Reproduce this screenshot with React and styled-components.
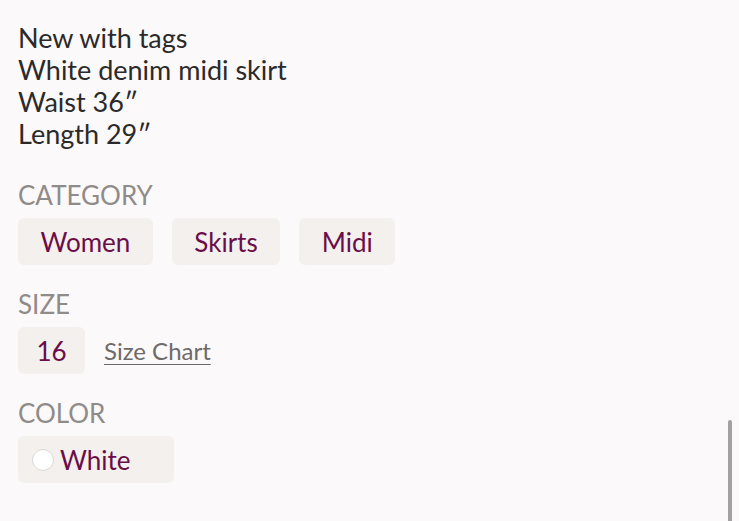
import styled, { createGlobalStyle } from "styled-components";

const Global = createGlobalStyle`
  html, body {
    margin: 0;
    padding: 0;
    background: #fcf9fa;
  }
  body {
    font-family: Lato, "Noto Sans", sans-serif;
  }
`;

const Page = styled.div`
  position: relative;
  width: 739px;
  height: 521px;
  overflow: hidden;
  padding: 22px 18px 0;
  box-sizing: border-box;
`;
const Description = styled.div`
  color: #2b2a2a;
  font-size: 27px;
  line-height: 32px;
`;
const Section = styled.div`
  margin-top: ${(p) => p.$top || 24}px;
`;
const Label = styled.div`
  color: #8f8b89;
  font-size: 26px;
  line-height: 30px;
  margin-bottom: 8px;
`;
const Row = styled.div`
  display: flex;
  align-items: center;
  gap: 19px;
`;
const Chip = styled.div`
  display: flex;
  align-items: center;
  justify-content: ${(p) => (p.$center ? "center" : "flex-start")};
  gap: 6px;
  height: 47px;
  box-sizing: border-box;
  padding: 0 ${(p) => p.$pad ?? 22.5}px;
  width: ${(p) => (p.$w ? `${p.$w}px` : "auto")};
  background: #f3f0ee;
  border-radius: 6px;
  color: #6b0d48;
  font-size: 26px;
`;
const Swatch = styled.span`
  width: 20px;
  height: 20px;
  border-radius: 50%;
  background: #ffffff;
  border: 1px solid #dcd8d6;
`;
const SizeLink = styled.a`
  color: #6e6a69;
  font-size: 24px;
  text-decoration: underline;
  text-underline-offset: 4px;
  text-decoration-thickness: 1px;
`;
const Scrollbar = styled.div`
  position: absolute;
  right: 7px;
  top: 420px;
  width: 4px;
  height: 110px;
  border-radius: 2px;
  background: #a3a1a1;
`;

export default function App() {
  return (
    <Page>
      <Global />
      <Description>
        New with tags
        <br />
        White denim midi skirt
        <br />
        Waist 36″
        <br />
        Length 29″
      </Description>
      <Section $top={30}>
        <Label>CATEGORY</Label>
        <Row>
          <Chip>Women</Chip>
          <Chip>Skirts</Chip>
          <Chip>Midi</Chip>
        </Row>
      </Section>
      <Section>
        <Label>SIZE</Label>
        <Row>
          <Chip $w={67} $pad={0} $center>
            16
          </Chip>
          <SizeLink>Size Chart</SizeLink>
        </Row>
      </Section>
      <Section>
        <Label>COLOR</Label>
        <Row>
          <Chip $pad={14} $w={156}>
            <Swatch />
            White
          </Chip>
        </Row>
      </Section>
      <Scrollbar />
    </Page>
  );
}
